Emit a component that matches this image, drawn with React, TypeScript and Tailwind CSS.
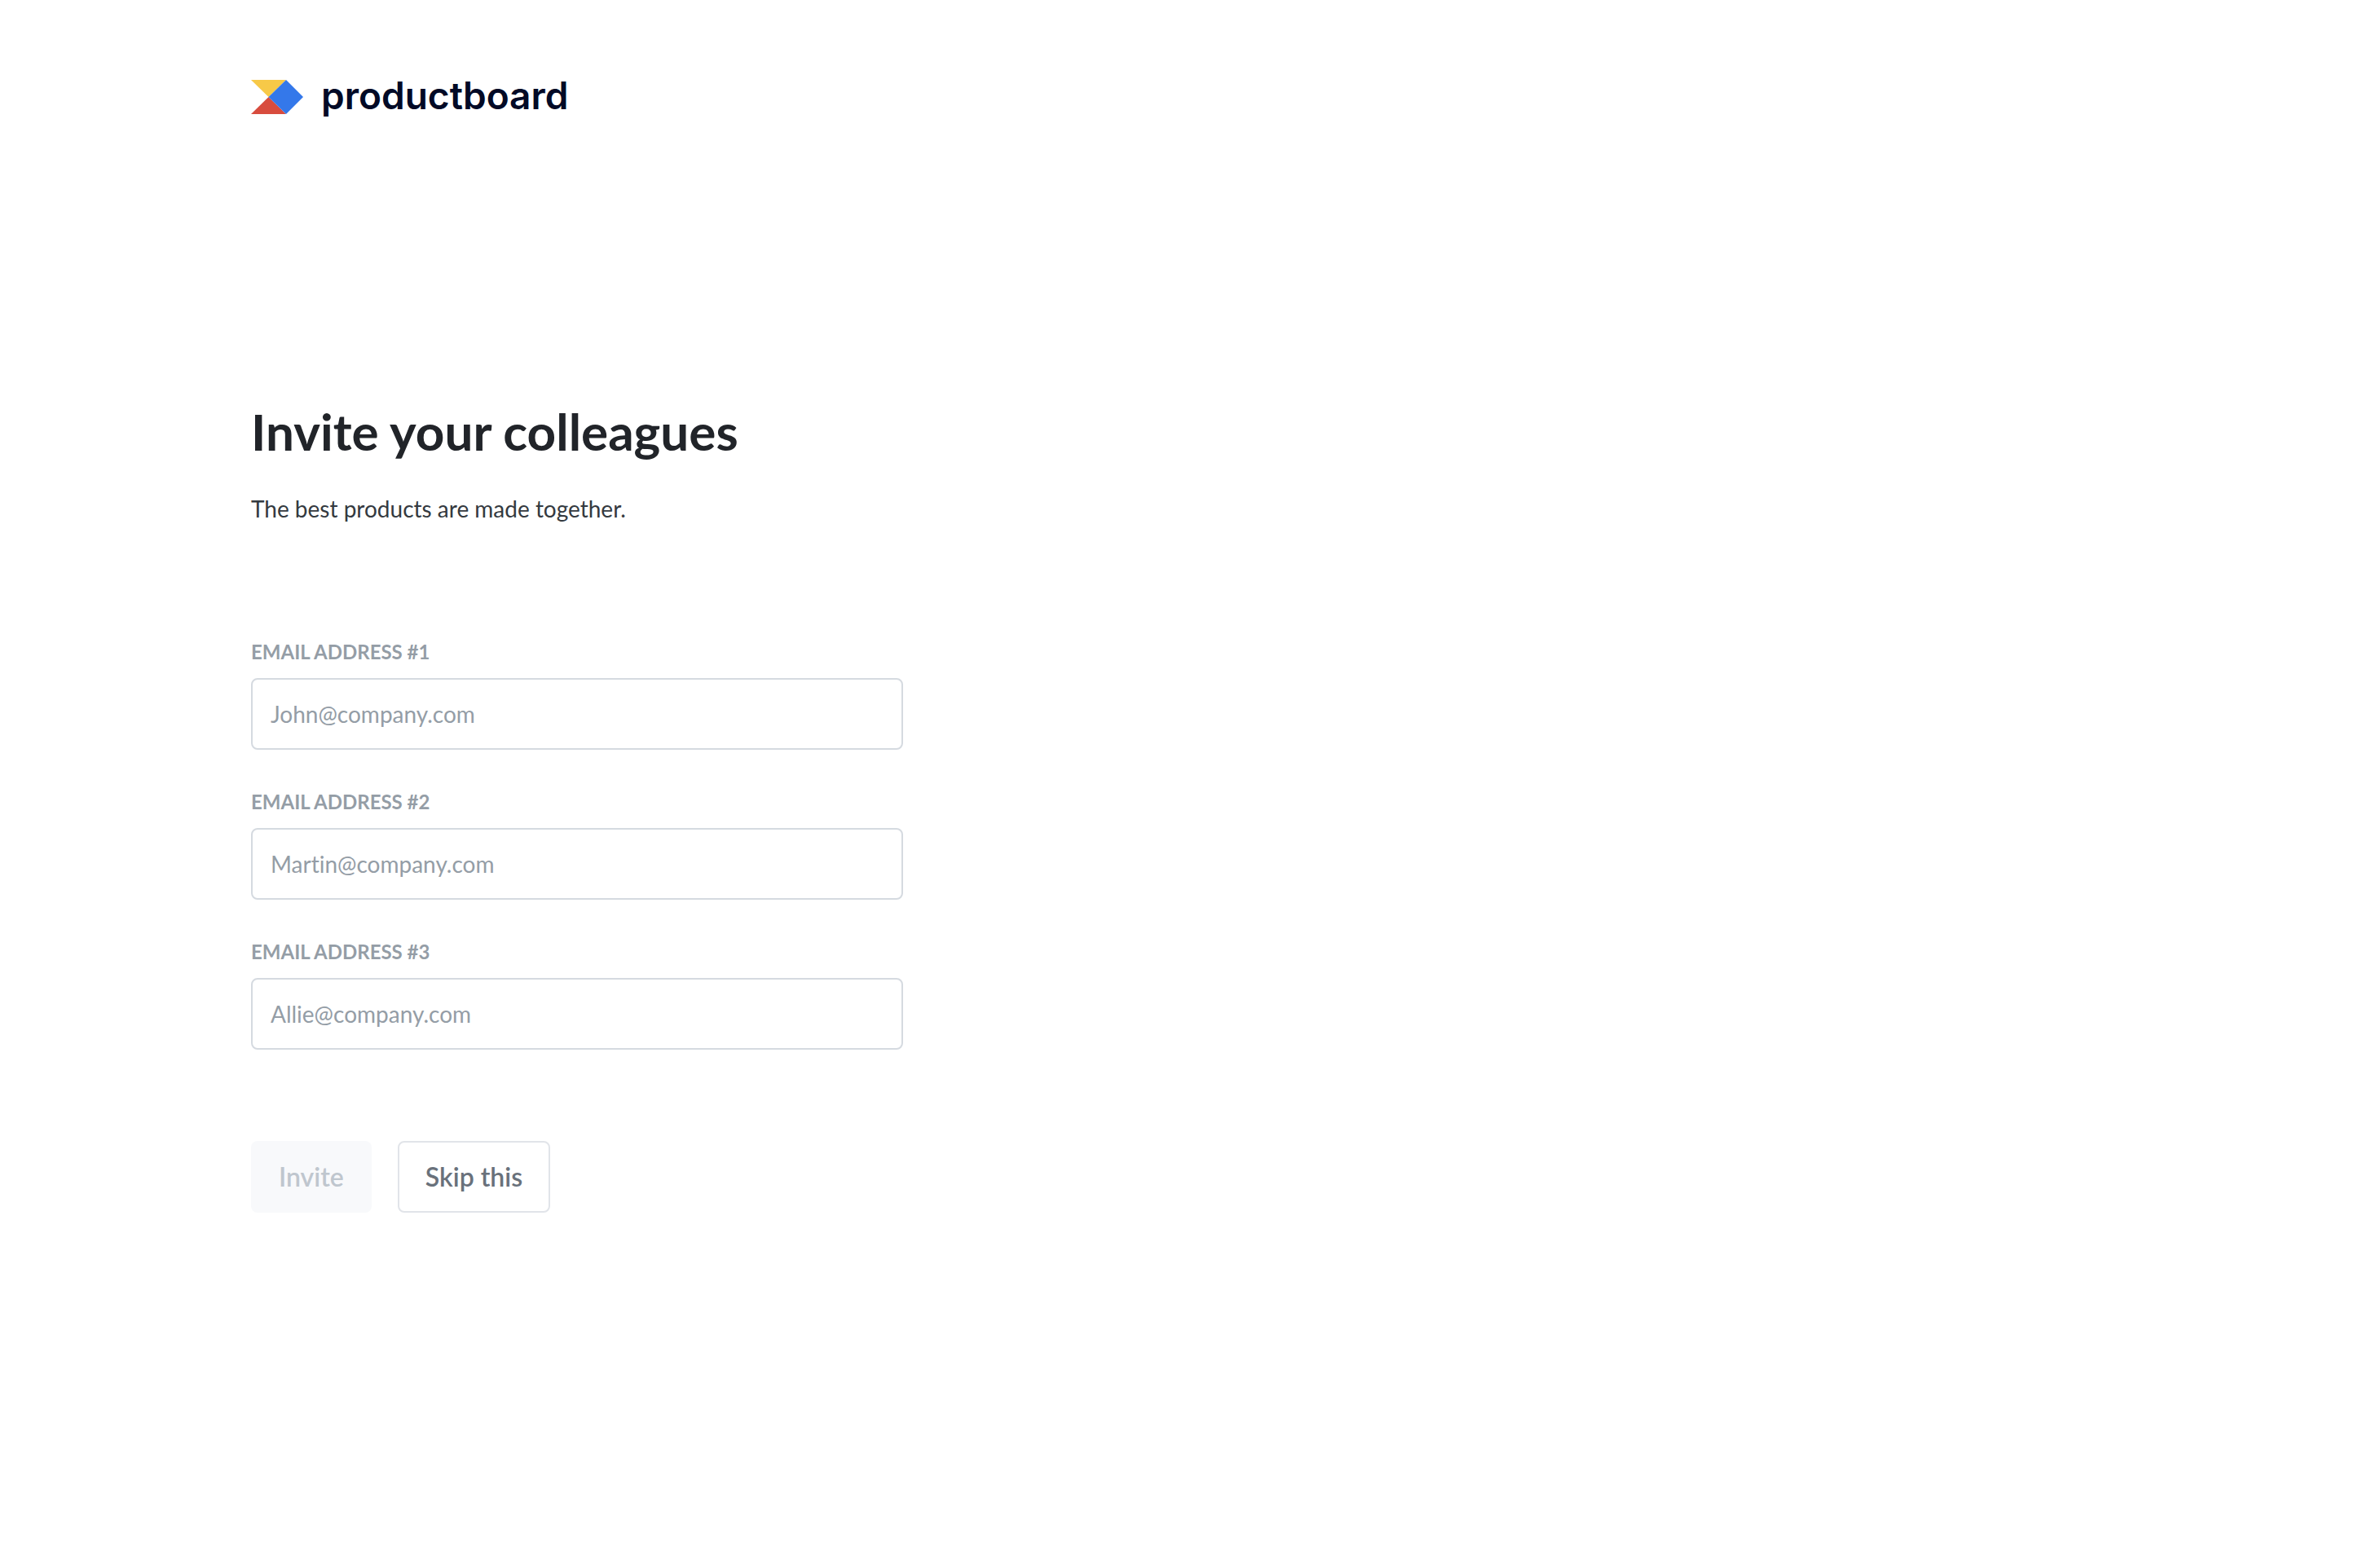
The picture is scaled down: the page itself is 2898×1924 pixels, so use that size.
const fields = [
  { id: 'email-1', label: 'Email address #1', placeholder: 'John@company.com' },
  { id: 'email-2', label: 'Email address #2', placeholder: 'Martin@company.com' },
  { id: 'email-3', label: 'Email address #3', placeholder: 'Allie@company.com' },
];

function Logo() {
  return (
    <div className="flex items-center gap-[22px]">
      <svg viewBox="0 0 64 42" className="mt-1 h-[42px] w-16" aria-hidden="true">
        <path d="M0 0H43L21.5 21Z" fill="#f7c948" />
        <path d="M0 42H43L21.5 21Z" fill="#d84c3e" />
        <path d="M43 0L64 21L43 42L21.5 21Z" fill="#3478ea" />
      </svg>
      <span className="font-['Inter',sans-serif] text-[46px] leading-[60px] font-semibold text-[#020a26]">
        productboard
      </span>
    </div>
  );
}

export default function App() {
  return (
    <main className="min-h-screen bg-white px-[308px] pt-[87px] font-['Lato',sans-serif] text-[#212429] [font-variant-ligatures:none]">
      <Logo />
      <div className="mt-[341px] w-full max-w-[800px]">
        <h1 className="text-[62px] leading-[82px] font-bold">Invite your colleagues</h1>
        <p className="mt-9 text-[28px] leading-[36px] text-[#343a40]">
          The best products are made together.
        </p>
        <form className="mt-[142px]" onSubmit={(e) => e.preventDefault()}>
          <div className="flex flex-col gap-12">
            {fields.map((f) => (
              <div key={f.id} className="flex flex-col gap-4">
                <label htmlFor={f.id} className="text-[24px] leading-8 font-bold text-[#949da6] uppercase">
                  {f.label}
                </label>
                <input
                  id={f.id}
                  type="email"
                  placeholder={f.placeholder}
                  className="h-[88px] w-full rounded-lg border-2 border-[#d5dae0] bg-white px-[22px] text-[28px] text-[#212429] placeholder:text-[#949da6] outline-none"
                />
              </div>
            ))}
          </div>
          <div className="mt-28 flex gap-8 text-[32px] font-semibold">
            <button
              type="submit"
              disabled
              className="h-[88px] rounded-lg bg-[#f8f9fb] px-[34px] text-[#bfc6ce]"
            >
              Invite
            </button>
            <button
              type="button"
              className="h-[88px] rounded-lg border-2 border-[#e1e4e9] bg-white px-8 text-[#69717b]"
            >
              Skip this
            </button>
          </div>
        </form>
      </div>
    </main>
  );
}
